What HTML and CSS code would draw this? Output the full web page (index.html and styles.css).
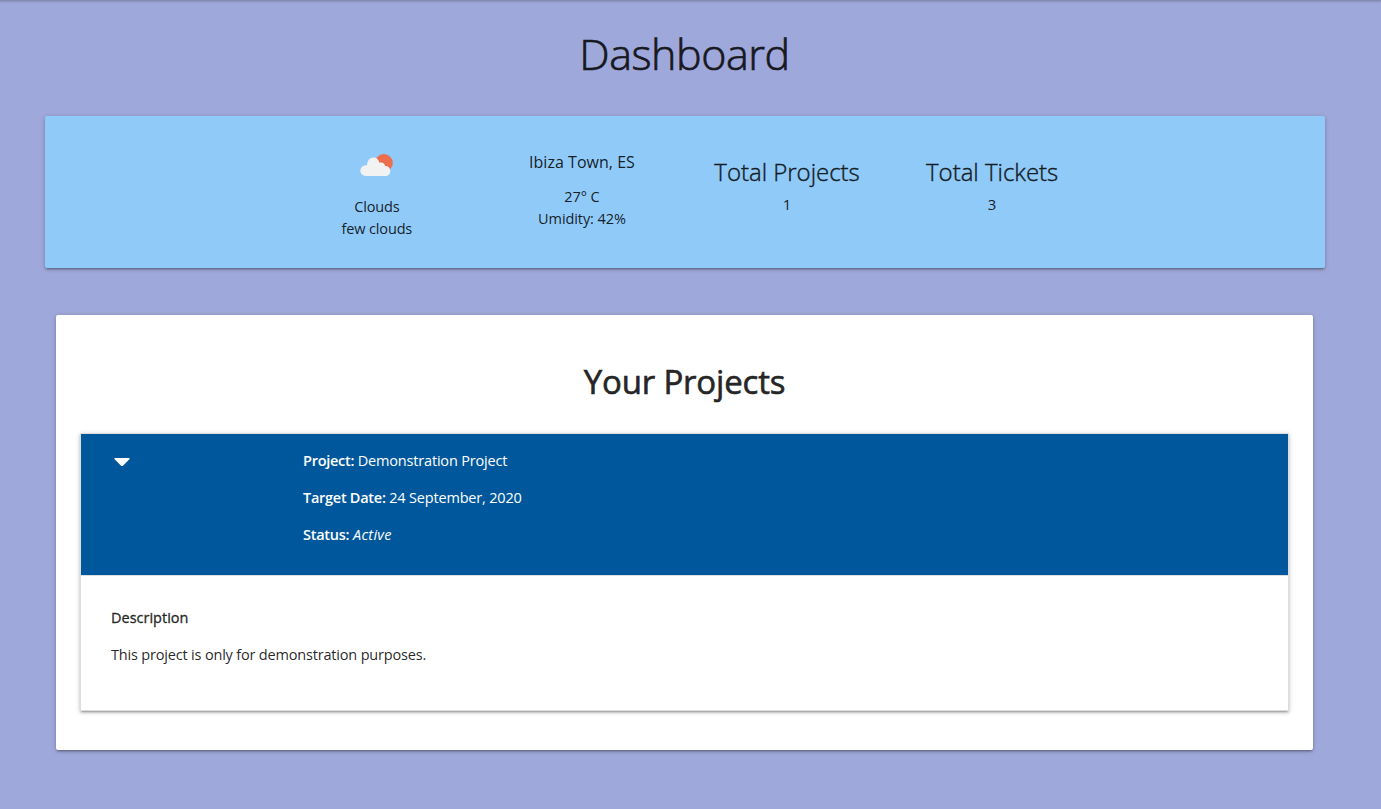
FILE: index.html
```html
<!DOCTYPE html>
<html lang="en">
<head>
<meta charset="utf-8">
<title>Dashboard</title>
<link rel="stylesheet" href="styles.css">
</head>
<body>
<div class="navbar-edge"></div>
<main class="page">
  <h1 class="page-title"><span>Dashboard</span></h1>
  <section class="stats card">
    <div class="stat weather">
      <svg class="weather-icon" width="50" height="50" viewBox="0 0 50 50">
        <circle cx="31.900" cy="23" r="8.900" fill="#ec6e4c"/>
        <path d="M13.600 36a5.400 5.400 0 0 1 .2-10.800h1.200c.3-4.600 3-7.600 6.400-7.600 2.900 0 5.200 1.800 6 5.100 2.900-.9 5.300.4 5.700 3.400 3.200-.1 5.200 2.100 5.200 4.900s-2 5-4.600 5z" fill="#f2f2f2"/>
      </svg>
      <p><span class="t-clouds">Clouds</span></p>
      <p><span class="t-clouds">few clouds</span></p>
    </div>
    <div class="stat place">
      <h2 class="place-name"><span>Ibiza Town, ES</span></h2>
      <p><span class="t-hum">27° C</span></p>
      <p><span class="t-hum">Umidity: 42%</span></p>
    </div>
    <div class="stat total">
      <h2 class="total-label"><span>Total Projects</span></h2>
      <p>1</p>
    </div>
    <div class="stat total">
      <h2 class="total-label"><span>Total Tickets</span></h2>
      <p>3</p>
    </div>
  </section>
  <section class="projects card">
    <h2 class="projects-title"><span>Your Projects</span></h2>
    <div class="collapsible">
      <header class="project-head">
        <svg class="caret" width="16" height="8" viewBox="0 0 16 8"><path d="M1 0h14c.7 0 .9.7.4 1.200L9.200 7.400c-.7.700-1.700.700-2.400 0L.6 1.200C.1.700.3 0 1 0z" fill="#fff"/></svg>
        <div class="project-info">
          <p><span class="t-project"><b>Project:</b> Demonstration Project</span></p>
          <p><span class="t-date"><b>Target Date:</b> 24 September, 2020</span></p>
          <p><span class="t-status"><b>Status:</b> <i>Active</i></span></p>
        </div>
      </header>
      <div class="project-body">
        <p><span class="t-desc">Description</span></p>
        <p><span class="t-text">This project is only for demonstration purposes.</span></p>
      </div>
    </div>
  </section>
</main>
</body>
</html>
```
FILE: styles.css
```css
* { box-sizing: border-box; }
body {
  margin: 0;
  height: 809px;
  overflow: hidden;
  background: #9fa8da;
  color: rgba(0, 0, 0, .87);
  font: 400 14.5px/22px "Segoe UI", "Open Sans", "Noto Sans", sans-serif;
}
h1, h2, p { margin: 0; font-weight: 400; }
span { white-space: nowrap; }
.navbar-edge {
  height: 0;
  box-shadow: 0 0 3px 1px rgba(0, 0, 0, .35);
}
.page { width: 1369px; }
.page-title {
  padding-top: 30px;
  height: 116px;
  font-size: 43px;
  font-weight: 300;
  letter-spacing: -.45px;
  -webkit-text-stroke: .7px #16171d;
  line-height: 48px;
  text-align: center;
}
.card {
  border-radius: 2px;
  box-shadow: 0 2px 2px 0 rgba(0, 0, 0, .14), 0 3px 1px -2px rgba(0, 0, 0, .12), 0 1px 5px 0 rgba(0, 0, 0, .2);
}
.stats {
  display: flex;
  justify-content: center;
  width: 1280px;
  height: 152px;
  margin-left: 45px;
  padding: 24px 1px 0 0;
  background: #90caf9;
}
.stat { width: 205.1px; text-align: center; }
.t-clouds { letter-spacing: -.15px; }
.t-hum { letter-spacing: -.08px; }
.weather-icon { display: block; margin: 0 auto 6px; }
.place-name { padding-top: 11px; margin-bottom: 13px; font-size: 16px; letter-spacing: .03px; }
.total-label {
  padding-top: 16px;
  margin-bottom: 5px;
  font-size: 24px;
  line-height: 32px;
  font-weight: 300;
  letter-spacing: -.02px;
  -webkit-text-stroke: .4px #131a20;
}
.total p { font-size: 15px; }
.projects {
  width: 1257px;
  height: 435px;
  margin: 47px 0 0 56px;
  padding: 43px 24px 0;
  background: #fff;
}
.projects-title {
  height: 75px;
  font-size: 33px;
  letter-spacing: -.18px;
  -webkit-text-stroke: .6px #212121;
  line-height: 48px;
  text-align: center;
}
.collapsible {
  width: 1209px;
  height: 278px;
  border: 1px solid #ddd;
  box-shadow: 0 2px 2px 0 rgba(0, 0, 0, .14), 0 3px 1px -2px rgba(0, 0, 0, .12), 0 1px 5px 0 rgba(0, 0, 0, .2);
}
.project-head {
  display: flex;
  height: 142px;
  padding: 16px 33px 0;
  border-bottom: 1px solid #ddd;
  background: #01579b;
  color: #fff;
}
.caret { margin-top: 8px; }
.project-info { margin-left: 173px; }
.project-info p, .project-body p { margin-bottom: 15px; }
.t-project, .t-date { letter-spacing: -.18px; }
b { font-weight: 600; letter-spacing: -.27px; }
i { letter-spacing: .3px; }
.project-body { padding: 31px 30px 0; }
.t-desc { -webkit-text-stroke: .3px #212121; }
.t-text { letter-spacing: -.18px; }
```
